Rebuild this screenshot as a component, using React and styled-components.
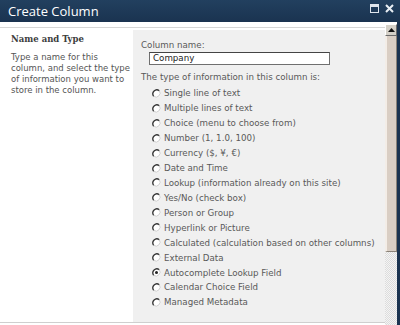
import styled, { createGlobalStyle } from "styled-components";

const Global = createGlobalStyle`
  html, body { margin: 0; padding: 0; background: #fff; }
  body { width: 400px; height: 325px; overflow: hidden; }
`;

const types = [
  "Single line of text",
  "Multiple lines of text",
  "Choice (menu to choose from)",
  "Number (1, 1.0, 100)",
  "Currency ($, ¥, €)",
  "Date and Time",
  "Lookup (information already on this site)",
  "Yes/No (check box)",
  "Person or Group",
  "Hyperlink or Picture",
  "Calculated (calculation based on other columns)",
  "External Data",
  "Autocomplete Lookup Field",
  "Calendar Choice Field",
  "Managed Metadata",
];

const Radio = ({ checked }) => (
  <svg width="9" height="9" viewBox="0 0 9 9">
    <circle cx="4.5" cy="4.5" r="4" fill="#fff" />
    <path d="M7.3 1.7 A4 4 0 0 0 1.7 7.3" fill="none" stroke="#333" strokeWidth="1.3" />
    <path d="M1.7 7.3 A4 4 0 0 0 7.3 1.7" fill="none" stroke="#ccc" strokeWidth="1" />
    {checked && <circle cx="4.5" cy="4.5" r="1.5" fill="#222" />}
  </svg>
);

const Window = () => (
  <Frame>
    <TitleBar>
      <Title>Create Column</Title>
      <TitleIcons>
        <svg width="9" height="9" viewBox="0 0 9 9">
          <rect x="0.5" y="0.5" width="8" height="8" fill="none" stroke="#dfe6ee" />
          <rect x="0.5" y="0.5" width="8" height="2.5" fill="#dfe6ee" />
        </svg>
        <svg width="9" height="9" viewBox="0 0 9 9">
          <path d="M1 1 L8 8 M8 1 L1 8" stroke="#e8eef4" strokeWidth="2" />
        </svg>
      </TitleIcons>
    </TitleBar>
    <Body>
      <Content>
        <TopStrip />
        <Section>
          <Aside>
            <AsideHead>Name and Type</AsideHead>
            <AsideText>
              Type a name for this column, and select the type of information you want to store in the column.
            </AsideText>
          </Aside>
          <Fields>
            <Label>Column name:</Label>
            <NameInput>Company</NameInput>
            <Label>The type of information in this column is:</Label>
            <Options>
              {types.map((t, i) => (
                <Option key={t}>
                  <Radio checked={i === 12} />
                  <span>{t}</span>
                </Option>
              ))}
            </Options>
          </Fields>
        </Section>
        <BottomLine />
      </Content>
      <ScrollBar>
        <ScrollUp>
          <svg width="7" height="4" viewBox="0 0 7 4">
            <path d="M0 4 L3.5 0 L7 4 Z" fill="#111" />
          </svg>
        </ScrollUp>
        <Thumb />
        <Track />
      </ScrollBar>
      <EdgeBorder />
    </Body>
  </Frame>
);

export default function App() {
  return (
    <>
      <Global />
      <Window />
    </>
  );
}

const Frame = styled.div`
  width: 400px;
  height: 325px;
  display: flex;
  flex-direction: column;
  background: #fff;
  font-family: "DejaVu Sans", Verdana, sans-serif;
`;

const TitleBar = styled.div`
  height: 22px;
  flex: none;
  display: flex;
  align-items: center;
  justify-content: space-between;
  padding: 0 6px 0 8px;
  background: linear-gradient(#22405f, #1a3350);
`;

const Title = styled.div`
  color: #fff;
  font-family: "Open Sans", "Liberation Sans", sans-serif;
  font-size: 13px;
`;

const TitleIcons = styled.div`
  display: flex;
  gap: 6px;
  align-items: center;
  margin-top: -6px;
`;

const Body = styled.div`
  flex: 1;
  display: flex;
  min-height: 0;
`;

const Content = styled.div`
  flex: 1;
  display: flex;
  flex-direction: column;
`;

const TopStrip = styled.div`
  height: 5px;
  border-bottom: 1px solid #d6d6d6;
  margin-bottom: 2px;
`;

const Section = styled.div`
  flex: 1;
  display: grid;
  grid-template-columns: 133px 1fr;
`;

const Aside = styled.div`
  padding: 4px 0 0 11px;
`;

const AsideHead = styled.div`
  font-family: "DejaVu Serif", Georgia, serif;
  font-weight: bold;
  font-size: 8.5px;
  color: #3c3c3c;
`;

const AsideText = styled.div`
  margin-top: 8px;
  font-size: 8.5px;
  line-height: 11px;
  color: #555;
`;

const Fields = styled.div`
  background: #f0f0f0;
  padding: 10px 0 0 8px;
  color: #595959;
  font-size: 8.7px;
`;

const Label = styled.div`
  line-height: 10px;
`;

const NameInput = styled.div`
  width: 176px;
  height: 11px;
  margin: 2px 0 7px 8px;
  border: 1px solid #6f6f6f;
  border-top-color: #444;
  background: #fff;
  color: #222;
  line-height: 11px;
  padding-left: 3px;
`;

const Options = styled.div`
  margin-top: 4px;
  padding-left: 11px;
  display: flex;
  flex-direction: column;
`;

const Option = styled.div`
  height: 14.93px;
  display: flex;
  align-items: center;
  gap: 3px;
`;

const BottomLine = styled.div`
  height: 2px;
  border-top: 1px solid #cfcfcf;
`;

const ScrollBar = styled.div`
  width: 12px;
  flex: none;
  display: flex;
  flex-direction: column;
  padding-top: 2px;
  background: #fff;
`;

const ScrollUp = styled.div`
  height: 12px;
  flex: none;
  display: flex;
  align-items: center;
  justify-content: center;
  background: #d4d0c8;
  border: 1px solid;
  border-color: #fff #6b6b6b #6b6b6b #fff;
  box-sizing: border-box;
`;

const Thumb = styled.div`
  height: 216px;
  flex: none;
  background: #d9cec4;
  border-left: 2px solid #f3ede7;
  border-right: 1px solid #8a8278;
  border-bottom: 1px solid #8a8278;
  box-sizing: border-box;
`;

const Track = styled.div`
  flex: 1;
  background-color: #f4f4f4;
  background-image: repeating-conic-gradient(#dcdcdc 0 25%, #f4f4f4 0 50%);
  background-size: 2px 2px;
`;

const EdgeBorder = styled.div`
  width: 3px;
  flex: none;
  background: #1b3350;
`;
